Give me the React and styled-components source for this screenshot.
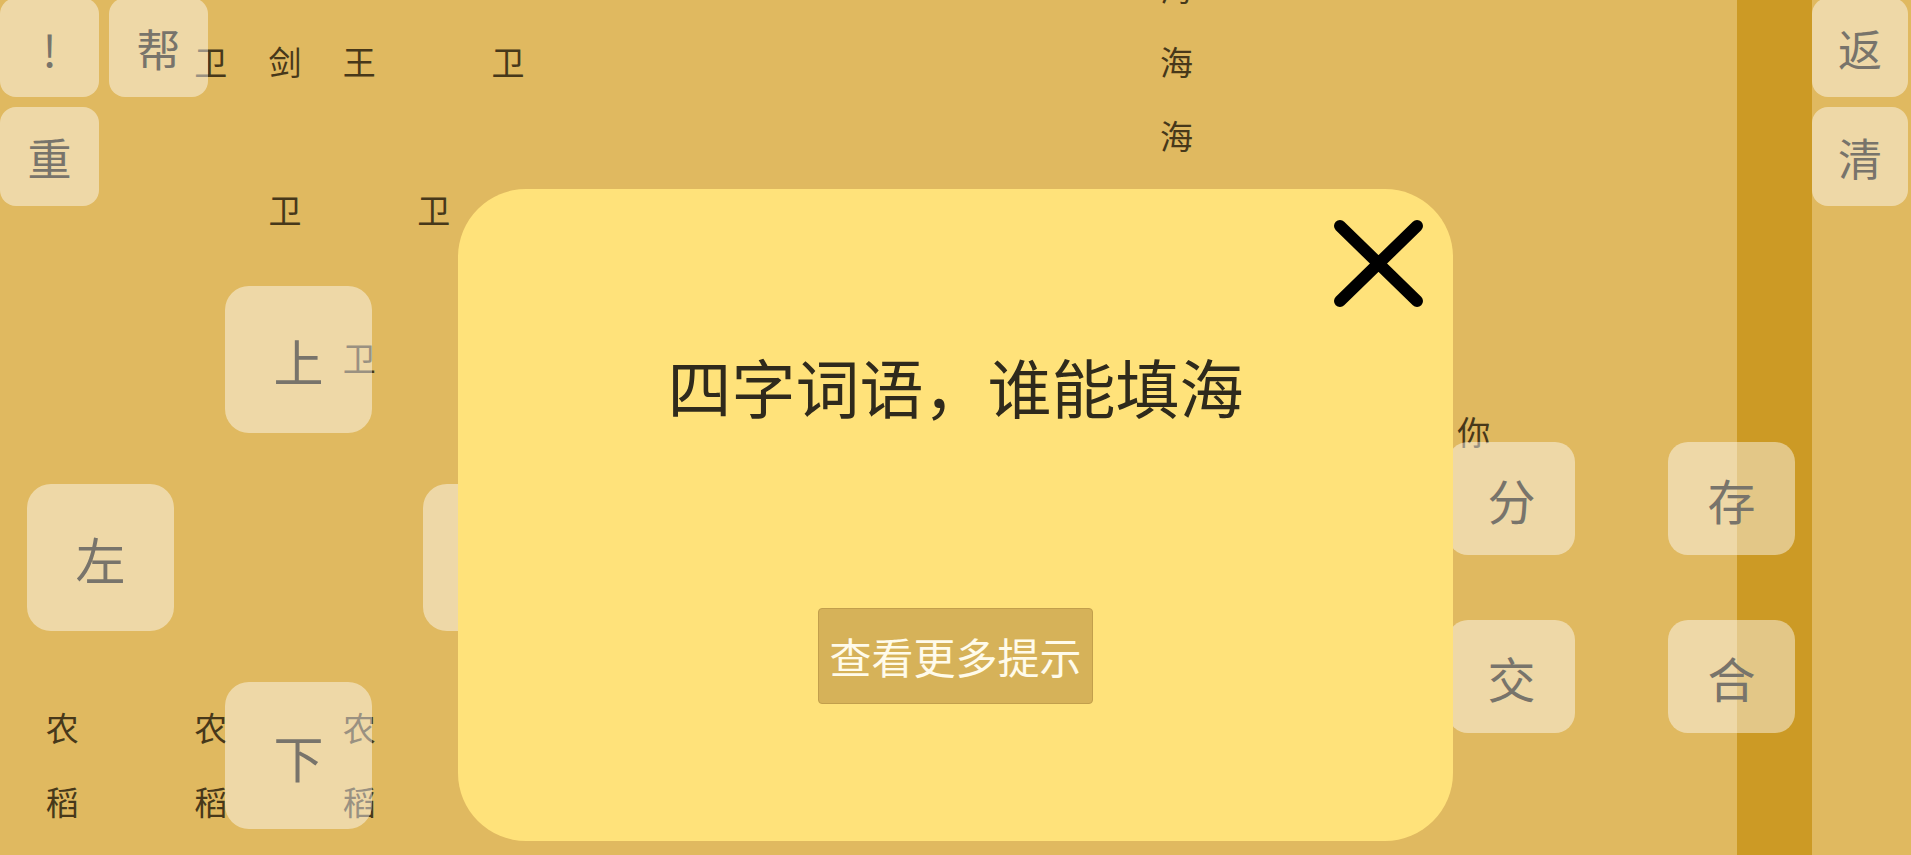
import React from 'react';
import styled, { createGlobalStyle } from 'styled-components';

const GlobalStyle = createGlobalStyle`
    html, body {
        margin: 0;
        padding: 0;
    }
    body {
        background: #e0b960;
        font-family: 'Noto Sans CJK SC', 'Noto Sans', sans-serif;
        overflow: hidden;
    }
`

const Screen = styled.div`
    position: relative;
    display: flex;
    width: 1911px;
    height: 855px;
    overflow: hidden;
    background: #e0b960;
`

const Board = styled.div`
    flex: none;
    width: 1737px;
    overflow: hidden;
`

const CharGrid = styled.div`
    display: grid;
    grid-template-columns: repeat(23, 74.3px);
    grid-auto-rows: 74px;
    margin: -50px 0 0 25px;
`

const Cell = styled.span`
    grid-column: ${p => p.$col + 1};
    grid-row: ${p => p.$row + 2};
    display: flex;
    align-items: center;
    justify-content: center;
    font-size: 33px;
    line-height: 1;
    color: #47381a;
`

const Stripe = styled.div`
    flex: none;
    width: 75px;
    background: #cc9a25;
`

const SideColumn = styled.div`
    flex: none;
    width: 96px;
    display: flex;
    flex-direction: column;
    gap: 10px;
    margin-top: -2px;
`

const sizes = {
    sm: { w: 99, h: 99, r: 16, fs: 44 },
    md: { w: 127, h: 113, r: 20, fs: 48 },
    lg: { w: 147, h: 147, r: 24, fs: 50 },
}

const Key = styled.button`
    flex: none;
    width: ${p => (p.$w || sizes[p.$size].w)}px;
    height: ${p => sizes[p.$size].h}px;
    border: none;
    padding: 0;
    border-radius: ${p => sizes[p.$size].r}px;
    background: rgba(255, 255, 255, 0.45);
    color: #78746b;
    font-family: inherit;
    font-size: ${p => sizes[p.$size].fs}px;
    line-height: 1;
    display: flex;
    align-items: center;
    justify-content: center;
    grid-area: ${p => p.$area || 'auto'};
`

const TopPad = styled.div`
    position: absolute;
    left: 0;
    top: -2px;
    display: grid;
    grid-template-columns: 99px 99px;
    column-gap: 10px;
    row-gap: 10px;
`

const DPad = styled.div`
    position: absolute;
    left: 27px;
    top: 286px;
    display: grid;
    grid-template-columns: repeat(3, 147px);
    grid-template-rows: repeat(3, 147px);
    grid-template-areas:
        ". up ."
        "left . right"
        ". down .";
    column-gap: 51px;
    row-gap: 51px;
`

const ActionPad = styled.div`
    position: absolute;
    left: 1448px;
    top: 442px;
    display: grid;
    grid-template-columns: 127px 127px;
    grid-auto-rows: 113px;
    column-gap: 93px;
    row-gap: 65px;
`

const Modal = styled.div`
    position: absolute;
    left: 458px;
    top: 189px;
    width: 995px;
    height: 652px;
    border-radius: 68px;
    background: #ffe27a;
    display: flex;
    flex-direction: column;
    align-items: center;
    box-sizing: border-box;
    padding-top: 164px;
`

const Close = styled.button`
    position: absolute;
    right: 28px;
    top: 29px;
    width: 93px;
    height: 91px;
    padding: 0;
    border: none;
    background: none;
`

const Title = styled.h2`
    margin: 0;
    font-size: 64px;
    font-weight: 400;
    line-height: 64px;
    color: #2f2a1c;
`

const HintButton = styled.button`
    margin-top: 191px;
    width: 275px;
    height: 96px;
    padding: 0;
    border: 1px solid #c29f4c;
    border-radius: 4px;
    background: #d6b259;
    color: #fffbea;
    font-family: inherit;
    font-size: 42px;
    line-height: 1;
`

const chars = [
    { c: '海', col: 15, row: -1 },
    { c: '卫', col: 2, row: 0 },
    { c: '剑', col: 3, row: 0 },
    { c: '王', col: 4, row: 0 },
    { c: '卫', col: 6, row: 0 },
    { c: '海', col: 15, row: 0 },
    { c: '海', col: 15, row: 1 },
    { c: '卫', col: 3, row: 2 },
    { c: '卫', col: 5, row: 2 },
    { c: '卫', col: 4, row: 4 },
    { c: '你', col: 19, row: 5 },
    { c: '农', col: 0, row: 9 },
    { c: '农', col: 2, row: 9 },
    { c: '农', col: 4, row: 9 },
    { c: '稻', col: 0, row: 10 },
    { c: '稻', col: 2, row: 10 },
    { c: '稻', col: 4, row: 10 },
]

export default function App() {
    return (
        <Screen>
            <GlobalStyle />
            <Board>
                <CharGrid>
                    {chars.map((ch, i) => (
                        <Cell key={i} $col={ch.col} $row={ch.row}>{ch.c}</Cell>
                    ))}
                </CharGrid>
            </Board>
            <Stripe />
            <SideColumn>
                <Key $size="sm" $w={96}>返</Key>
                <Key $size="sm" $w={96}>清</Key>
            </SideColumn>

            <TopPad>
                <Key $size="sm">!</Key>
                <Key $size="sm">帮</Key>
                <Key $size="sm">重</Key>
            </TopPad>

            <DPad>
                <Key $size="lg" $area="up">上</Key>
                <Key $size="lg" $area="left">左</Key>
                <Key $size="lg" $area="right">右</Key>
                <Key $size="lg" $area="down">下</Key>
            </DPad>

            <ActionPad>
                <Key $size="md">分</Key>
                <Key $size="md">存</Key>
                <Key $size="md">交</Key>
                <Key $size="md">合</Key>
            </ActionPad>

            <Modal>
                <Close aria-label="关闭">
                    <svg width="93" height="91" viewBox="0 0 93 91">
                        <path d="M8 8 L85 83 M85 8 L8 83" stroke="#000" strokeWidth="12" strokeLinecap="round" fill="none" />
                    </svg>
                </Close>
                <Title>四字词语，谁能填海</Title>
                <HintButton>查看更多提示</HintButton>
            </Modal>
        </Screen>
    );
}
